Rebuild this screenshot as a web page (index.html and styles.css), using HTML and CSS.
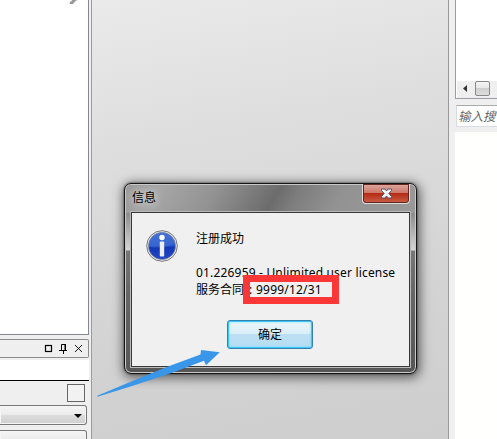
FILE: index.html
```
<!DOCTYPE html>
<html lang="zh">
<head>
<meta charset="utf-8">
<title>信息</title>
<link rel="stylesheet" href="styles.css">
</head>
<body>
<div class="app">
  <aside class="left">
    <div class="tree"><svg class="tool" width="10" height="5" viewBox="0 0 10 5"><path d="M.5 2.500L3 .5V0H8.500L6.500 1 4 4H1Z" fill="#999"/></svg></div>
    <div class="panel-title">
      <svg width="45" height="17" viewBox="0 0 45 17" fill="none" stroke="#000">
        <rect x="2.500" y="5.500" width="6" height="6" stroke-width="1.200"/>
        <path d="M18.500 10V4.500H22V10M16 10.500H24M20.500 11V14M22.500 4V10"/>
        <path d="M32 5L39 12M39 5L32 12" stroke-width=".9"/>
      </svg>
    </div>
    <div class="input"></div>
    <div class="tool-row"><span class="square"></span></div>
    <div class="combo"><span class="caret"></span></div>
    <div class="combo next"></div>
  </aside>
  <main class="canvas"></main>
  <aside class="right">
    <div class="list"><div class="scroll"><span class="arrow"></span><span class="thumb"></span></div></div>
    <div class="search">输入搜</div>
    <div class="results"></div>
  </aside>
</div>

<section class="dialog">
  <header class="caption"><span class="caption-text">信息</span>
    <span class="close"><svg width="13" height="11" viewBox="0 0 13 11"><path d="M1.500 1H5L6.500 3 8 1H11.500V2.500L8.800 5.500 11.500 8.500V10H8L6.500 8 5 10H1.500V8.500L4.200 5.500 1.500 2.500Z" fill="#f4f4f4" stroke="#535666" stroke-width="1"/></svg></span>
  </header>
  <div class="client">
    <svg class="info" width="32" height="32" viewBox="0 0 32 32">
      <defs><linearGradient id="blue" x2="0" y2="1"><stop stop-color="#3b68cf"/><stop offset=".48" stop-color="#2956cb"/><stop offset=".55" stop-color="#1237b4"/><stop offset="1" stop-color="#2349cb"/></linearGradient></defs>
      <circle cx="16" cy="16" r="15.300" fill="#eee" stroke="#777" stroke-width="1"/>
      <circle cx="16" cy="16" r="13.600" fill="url(#blue)" stroke="#8c8c94" stroke-width=".8"/>
      <path d="M3 17A13 13 0 0 1 29 13Q19 19 3 17Z" fill="#5380dc" opacity=".35"/>
      <circle cx="16" cy="7.500" r="2.700" fill="#fff"/>
      <rect x="13.800" y="11.500" width="4.400" height="15" rx=".7" fill="#eee"/>
    </svg>
    <div class="message">
      <p class="ok">注册成功</p>
      <p class="license">01.226959 - Unlimited user license</p>
      <p class="contract">服务合同<span class="colon">:</span><span class="date">9999/12/31</span></p>
    </div>
    <button class="confirm">确定</button>
  </div>
</section>
<div class="highlight"></div>
<svg class="pointer" width="124" height="50" viewBox="0 0 124 50"><path d="M.5 47.800L.3 46.800 45 28 73 16.800 103.500 5.500 104 1 122.800 3.300 109 16.300 107 11.800 73 24.500 35 37Z" fill="#3996e8"/></svg>
</body>
</html>
```
FILE: styles.css
```
* { box-sizing: border-box; }
body { margin: 0; width: 497px; height: 439px; overflow: hidden; font: 12px/17px "Noto Sans", "Noto Sans CJK SC", sans-serif; color: #000; }
.app { display: flex; width: 497px; height: 439px; background: #efefef; }
.left { width: 92px; flex: none; border-right: 1px solid #9b9b9b; overflow: hidden; }
.tree { width: 89px; height: 335px; background: #fff; border: solid #858891; border-width: 0 1px 1px 0; }
.tool { display: block; margin-left: 69px; }
.panel-title { width: 89px; height: 19px; margin-top: 4px; border: 1px solid #8b8b8b; border-left: 0; border-radius: 0 2px 2px 0; display: flex; justify-content: flex-end; }
.panel-title svg { flex: none; }
.input { width: 89px; height: 23px; background: #fff; border-bottom: 1px solid #000; border-top: 2px solid #efefef; }
.tool-row { height: 24px; padding: 3px 0 0 67px; }
.square { display: block; width: 18px; height: 18px; border: 1px solid #666; background: #f2f2f2; }
.combo { width: 87px; height: 20px; border: 1px solid #777; border-left: 0; border-radius: 0 3px 3px 0; background: linear-gradient(#f3f3f3 0 10%, #ebebeb 50%, #ddd 51%, #cfcfcf); padding: 8px 4px 0 0; box-shadow: inset 0 0 0 1px #f5f5f5; }
.left .combo.next { margin-top: 5px; }
.caret { display: block; margin-left: auto; width: 8px; height: 4px; background: #000; clip-path: polygon(0 0, 100% 0, 50% 100%); }
.canvas { width: 356px; flex: none; background: linear-gradient(170deg, #eaeaea, #dedede 30%, #d3d3d3 70%, #cecece); }
.right { flex: 1; min-width: 0; border-left: 1px solid #999; padding-left: 6px; overflow: hidden; }
.list { height: 99px; background: #fff; border: solid #9a9ca5; border-width: 0 0 1px 1px; display: flex; align-items: flex-end; }
.scroll { width: 100%; height: 17px; background: #efefef; display: flex; margin-left: 1px; }
.arrow { width: 4px; height: 7px; margin: 4px 8px 0 6px; background: #333; clip-path: polygon(0 50%, 100% 0, 100% 100%); }
.thumb { width: 15px; height: 15px; border: 1px solid #888; border-radius: 2px; background: linear-gradient(#f5f5f5, #e8e8e8 45%, #cfcfcf 50%, #ddd); }
.search { height: 22px; margin: 6px 0 0 1px; border: 1px solid #d8dbe3; border-top-color: #aaa; border-right: 0; background: #fff; padding: 1px 0 0 1px; font: italic 12.500px/17px "Noto Sans CJK SC", sans-serif; white-space: nowrap; color: #666; }
.results { height: 312px; margin-top: 5px; background: #fffffe; }
.dialog { position: absolute; left: 124px; top: 183px; width: 293px; height: 191px; padding: 0 7px 7px; border: 1px solid #141414; border-radius: 7px; background: linear-gradient(#a1a1a1, #8a8a8a 28px, #d5d5d5 66px, #777 67px, #666 110px, #565656); box-shadow: inset 0 0 0 1px #c8c8c8, 0 0 2px #222, 1px 2px 11px 2px rgba(0,0,0,.55); }
.dialog::before { content: ""; position: absolute; left: 1px; right: 1px; top: 1px; height: 28px; border-radius: 5px 5px 0 0; background: linear-gradient(120deg, #999 0, #a6a6a6 12%, #939393 30%, #6c6c6c 51%, #7d7d7d 58%, #929292 72%, #999); }
.caption { position: relative; height: 28px; display: flex; justify-content: space-between; }
.caption-text { padding-top: 5px; text-shadow: 0 0 7px #ddd, 0 0 10px #ddd; }
.close { width: 48px; height: 20px; margin-right: -1px; border: 1px solid #ddd; border-top: 0; border-radius: 0 0 4px 4px; background: linear-gradient(#ddaaa0, #cd7a6b 45%, #b52b15 50%, #cc6048); box-shadow: inset 0 0 0 1px #63251f; display: flex; align-items: center; justify-content: center; }
.client { position: relative; width: 279px; height: 155px; margin: 0 -1px; border: 1px solid #383838; outline: 1px solid #b9b9b9; background: #f0f0f0; display: grid; grid-template-columns: 64px 1fr; grid-template-rows: 107px 29px; }
.info { margin: 17px 0 0 14px; }
.message { padding-top: 17px; }
.message p { margin: 0; white-space: nowrap; height: 17px; }
.message .license { margin-top: 17px; letter-spacing: .18px; }
.date { letter-spacing: .2px; }
.colon { display: inline-block; width: 12px; padding-left: 5px; }
.confirm { grid-column: 1 / 3; margin: 0 0 0 95px; width: 86px; height: 29px; border: 1px solid #377fae; border-radius: 3px; background: linear-gradient(#edf6fb, #d9edf8 49%, #bddff3 50%, #b5def4); box-shadow: inset 0 0 0 1px #35cafa, inset 0 0 2px 1px #64d8fb; font: inherit; color: #000; padding: 0; }
.highlight { position: absolute; left: 243px; top: 275px; width: 96px; height: 29px; border: 7px solid #fb3737; }
.pointer { position: absolute; left: 97px; top: 349px; }
```
